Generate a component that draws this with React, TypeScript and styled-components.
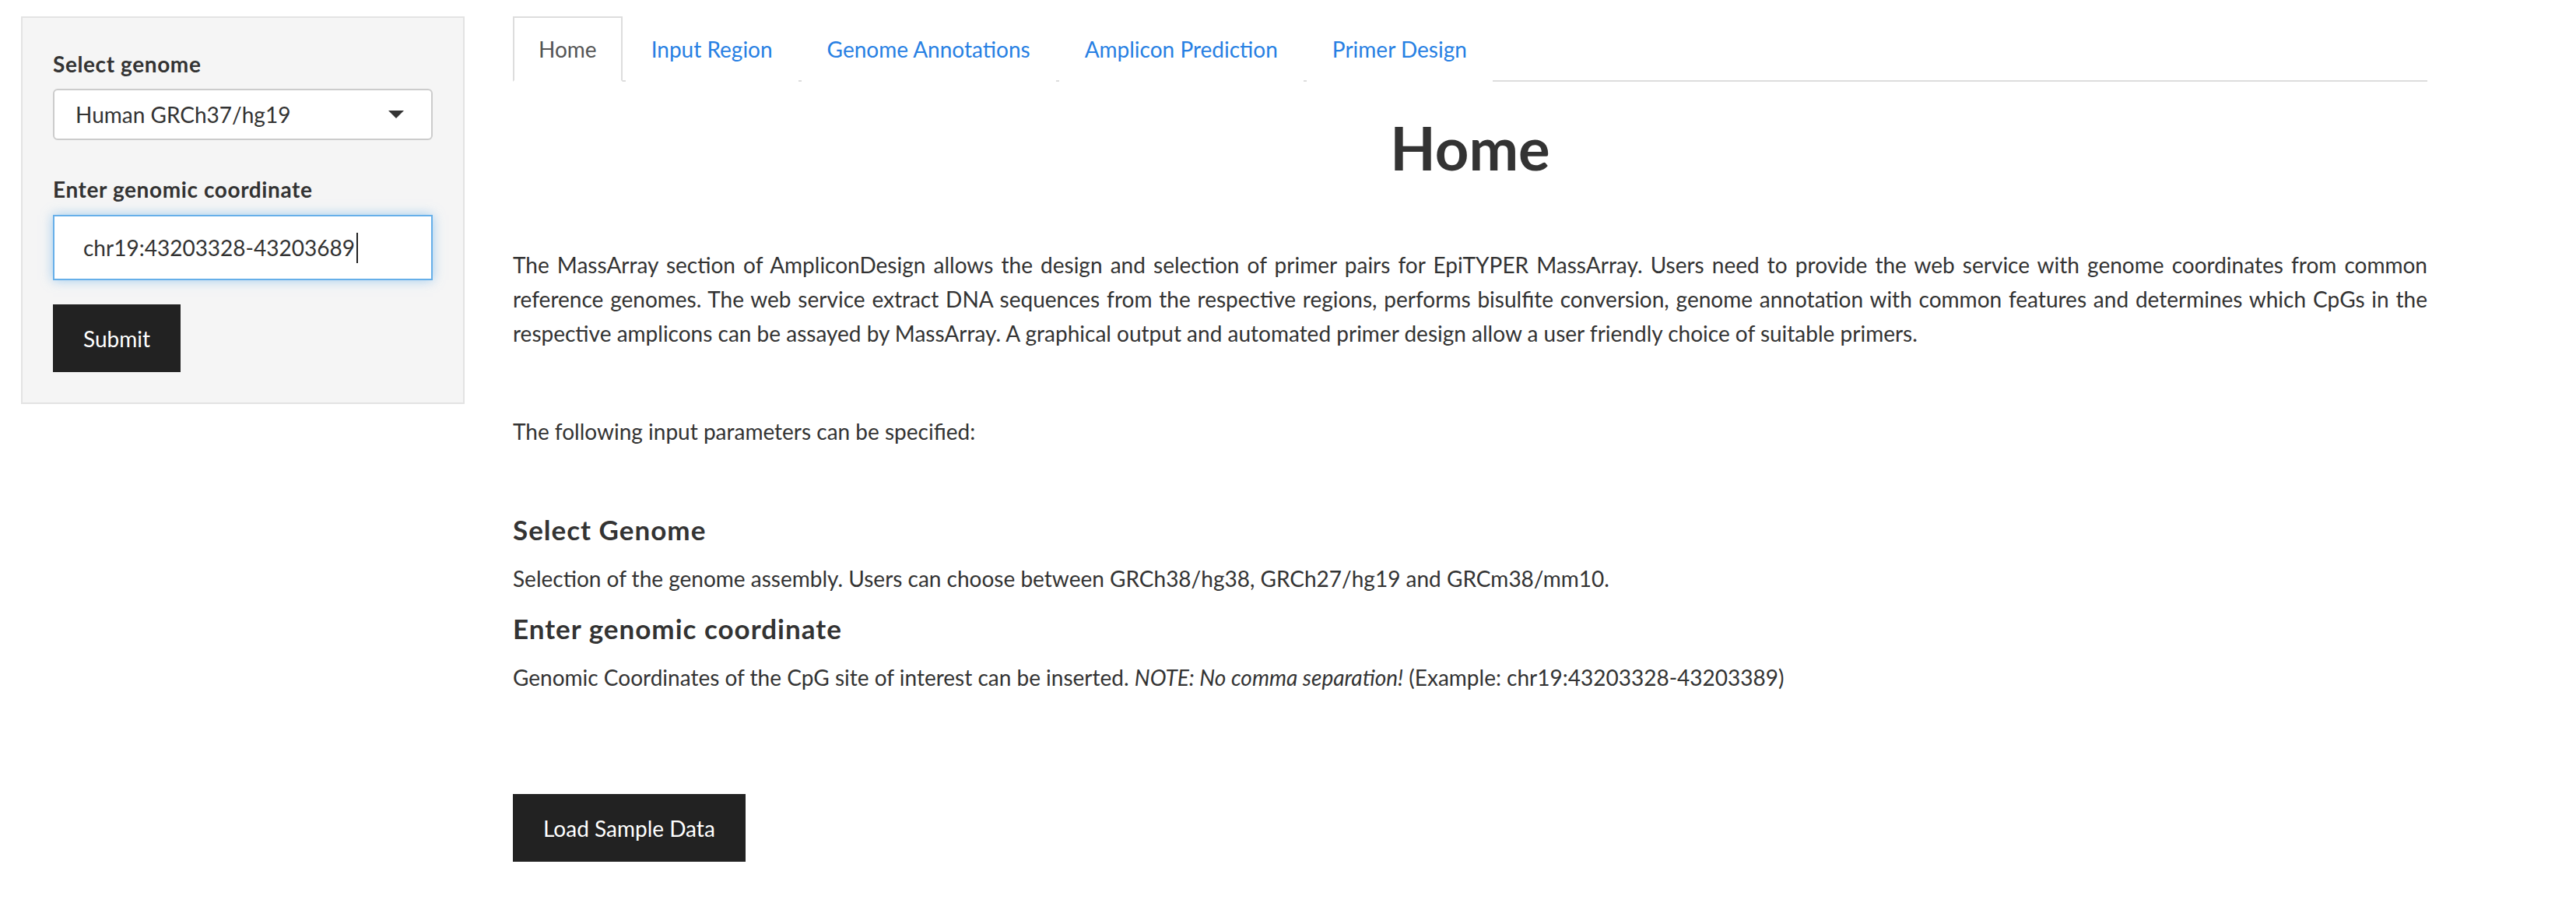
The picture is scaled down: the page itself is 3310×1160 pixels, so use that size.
import React from "react";
import styled, { createGlobalStyle } from "styled-components";

const GlobalStyle = createGlobalStyle`
  html, body { margin: 0; padding: 0; background: #ffffff; }
  body {
    font-family: Lato, "Noto Sans", "Liberation Sans", sans-serif;
    color: #333333;
    font-size: 28px;
    line-height: 44px;
  }
  * { box-sizing: border-box; }
`;

const Page = styled.div`
  display: grid;
  grid-template-columns: 570px 2460px;
  column-gap: 62px;
  align-items: start;
  padding: 21px 0 0 27px;
`;

const Well = styled.aside`
  display: flex;
  flex-direction: column;
  background: #f5f5f5;
  border: 2px solid #e3e3e3;
  padding: 37px 39px 39px;
`;

const Field = styled.div<{ $gap: number; $after: number }>`
  display: flex;
  flex-direction: column;
  gap: ${(p) => p.$gap}px;
  margin-bottom: ${(p) => p.$after}px;
`;

const Label = styled.label`
  font-weight: 700;
  font-size: 28px;
  line-height: 44px;
  letter-spacing: 0.6px;
  color: #333333;
`;

const SelectBox = styled.div`
  display: flex;
  align-items: center;
  justify-content: space-between;
  height: 66px;
  padding: 0 35px 0 27px;
  background: #ffffff;
  border: 2px solid #cccccc;
  border-radius: 6px;
  font-size: 28px;
  color: #333333;
`;

const InputBox = styled.div`
  display: flex;
  align-items: center;
  height: 84px;
  padding: 0 37px;
  background: #ffffff;
  border: 2px solid #66afe9;
  box-shadow: 0 0 14px rgba(102, 175, 233, 0.6);
  font-size: 28px;
  color: #333333;
`;

const Caret = styled.span`
  display: inline-block;
  width: 2px;
  height: 39px;
  margin-left: 2px;
  background: #222222;
`;

const DarkButton = styled.button<{ $top?: number }>`
  align-self: flex-start;
  height: 87px;
  margin-top: ${(p) => p.$top ?? 0}px;
  padding: 0 39px;
  border: none;
  border-radius: 0;
  background: #222222;
  color: #ffffff;
  font-family: inherit;
  font-size: 28px;
  line-height: 44px;
  cursor: pointer;
`;

const Main = styled.main`
  display: flex;
  flex-direction: column;
`;

const TabBar = styled.nav`
  display: flex;
  gap: 4px;
  border-bottom: 2px solid #dddddd;
`;

const Tab = styled.a<{ $active?: boolean }>`
  display: flex;
  align-items: center;
  height: 84px;
  margin-bottom: -2px;
  padding: 0 31px;
  border: 2px solid ${(p) => (p.$active ? "#dddddd" : "transparent")};
  border-bottom-color: ${(p) => (p.$active ? "#ffffff" : "transparent")};
  background: #ffffff;
  color: ${(p) => (p.$active ? "#555555" : "#2780e3")};
  font-size: 28px;
  text-decoration: none;
  cursor: pointer;
`;

const Title = styled.h1`
  margin: 42px 0 0;
  text-align: center;
  font-size: 76px;
  line-height: 85px;
  font-weight: 700;
  color: #333333;
`;

const Para = styled.p<{ $top: number }>`
  margin: ${(p) => p.$top}px 0 0;
  text-align: justify;
`;

const SubHead = styled.h4<{ $top: number }>`
  margin: ${(p) => p.$top}px 0 0;
  font-size: 35px;
  line-height: 37px;
  letter-spacing: 1px;
  font-weight: 700;
  color: #333333;
`;

const tabs = ["Home", "Input Region", "Genome Annotations", "Amplicon Prediction", "Primer Design"];

export default function App() {
  return (
    <>
      <GlobalStyle />
      <Page>
        <Well>
          <Field $gap={10} $after={41}>
            <Label>Select genome</Label>
            <SelectBox>
              <span>Human GRCh37/hg19</span>
              <svg width="20" height="10" viewBox="0 0 20 10">
                <polygon points="0,0 20,0 10,10" fill="#333" />
              </svg>
            </SelectBox>
          </Field>
          <Field $gap={11} $after={31}>
            <Label>Enter genomic coordinate</Label>
            <InputBox>
              <span>chr19:43203328-43203689</span>
              <Caret />
            </InputBox>
          </Field>
          <DarkButton>Submit</DarkButton>
        </Well>
        <Main>
          <TabBar>
            {tabs.map((t, i) => (
              <Tab key={t} $active={i === 0}>
                {t}
              </Tab>
            ))}
          </TabBar>
          <Title>Home</Title>
          <Para $top={86}>
            The MassArray section of AmpliconDesign allows the design and selection of primer pairs for EpiTYPER
            MassArray. Users need to provide the web service with genome coordinates from common reference genomes. The
            web service extract DNA sequences from the respective regions, performs bisulfite conversion, genome
            annotation with common features and determines which CpGs in the respective amplicons can be assayed by
            MassArray. A graphical output and automated primer design allow a user friendly choice of suitable primers.
          </Para>
          <Para $top={82}>The following input parameters can be specified:</Para>
          <SubHead $top={86}>Select Genome</SubHead>
          <Para $top={22}>
            Selection of the genome assembly. Users can choose between GRCh38/hg38, GRCh27/hg19 and GRCm38/mm10.
          </Para>
          <SubHead $top={24}>Enter genomic coordinate</SubHead>
          <Para $top={22}>
            Genomic Coordinates of the CpG site of interest can be inserted. <em>NOTE: No comma separation!</em>{" "}
            (Example: chr19:43203328-43203389)
          </Para>
          <DarkButton $top={128}>Load Sample Data</DarkButton>
        </Main>
      </Page>
    </>
  );
}
